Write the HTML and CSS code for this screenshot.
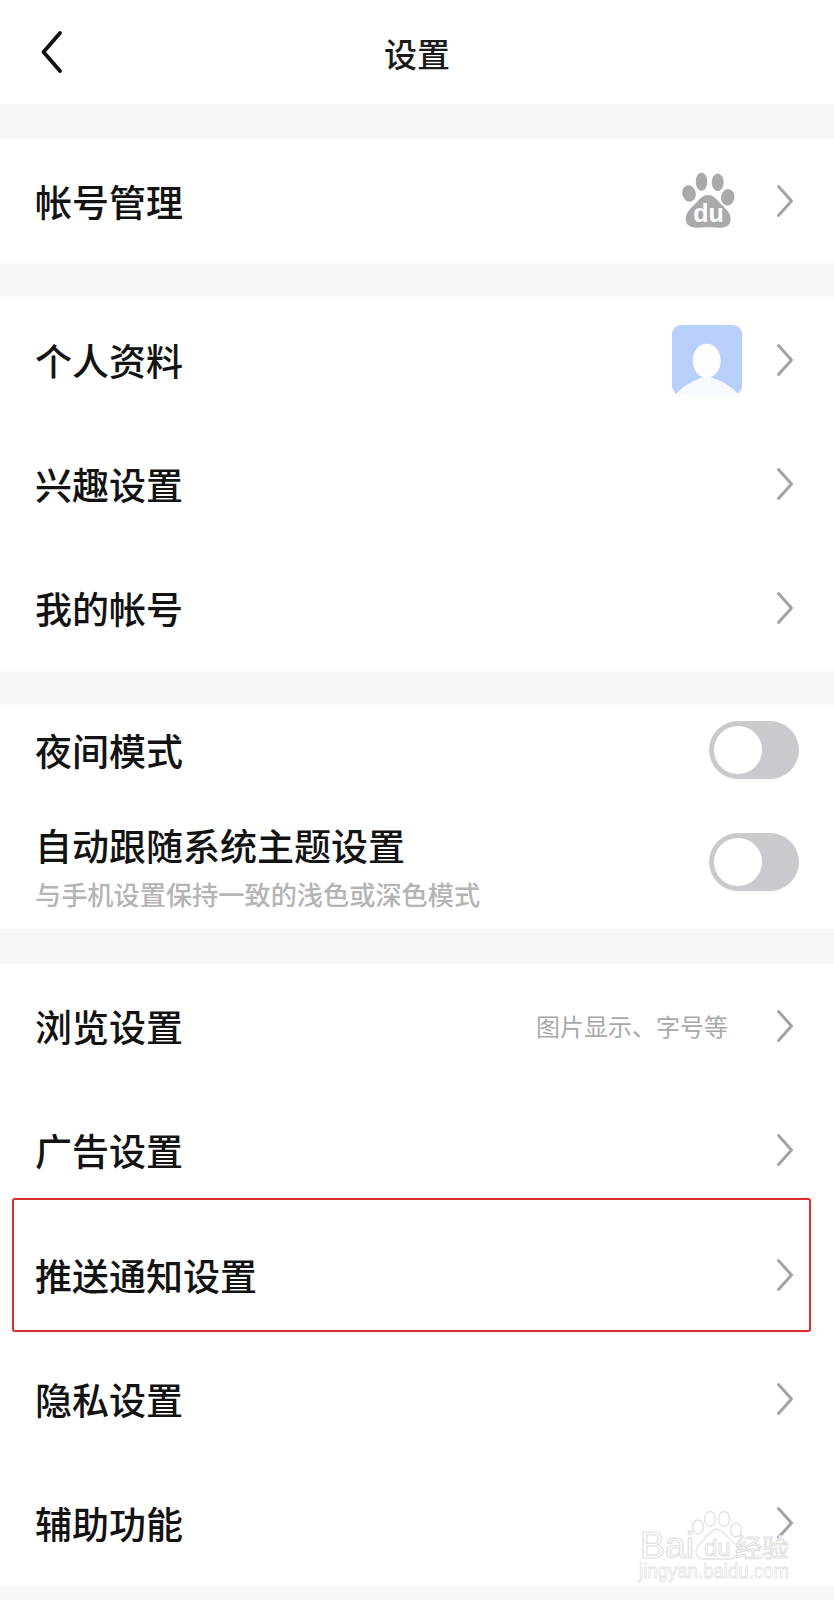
FILE: index.html
```html
<!DOCTYPE html>
<html lang="zh-CN">
<head>
    <meta charset="UTF-8">
    <meta name="viewport" content="width=device-width, initial-scale=1.0">
    <title>设置</title>
    <link rel="stylesheet" href="styles.css">
</head>
<body>
    <div class="page">
        <div class="header">
            <svg class="back-icon" width="24" height="44" viewBox="0 0 24 44">
                <path d="M21 3 L4.5 22 L21 41" fill="none" stroke="#111" stroke-width="3.8" stroke-linecap="round" stroke-linejoin="round"/>
            </svg>
            <h1 class="title">设置</h1>
        </div>

        <div class="group">
            <div class="row">
                <span class="label">帐号管理</span>
                <svg class="paw" width="54" height="58" viewBox="0 0 54 58">
                    <ellipse cx="7" cy="21.5" rx="6.7" ry="8.3" fill="#a9a9a9" transform="rotate(-15 7 21.5)"/>
                    <ellipse cx="19.5" cy="9.7" rx="5.8" ry="9.2" fill="#a9a9a9"/>
                    <ellipse cx="35.7" cy="10.3" rx="6" ry="8.7" fill="#a9a9a9"/>
                    <ellipse cx="45.7" cy="25.3" rx="6.7" ry="8.3" fill="#a9a9a9" transform="rotate(10 45.7 25.3)"/>
                    <path d="M26 23 C32 23 35 28 39 32 C44 37 49 41 48.7 48 C48 55 41 56.5 34 55.5 C29 55 24 55 19 55.5 C11 56.5 4 55 3.7 47 C3.7 40 9 36 13 32 C17 28 20 23 26 23 Z" fill="#a9a9a9"/>
                    <text class="paw-text" x="26.5" y="50" text-anchor="middle">du</text>
                </svg>
                <svg class="chevron" width="18" height="34" viewBox="0 0 18 34"><path d="M2.5 2.5 L15.5 17 L2.5 31.5"/></svg>
            </div>
        </div>

        <div class="group">
            <div class="row">
                <span class="label">个人资料</span>
                <svg class="avatar" width="70" height="70" viewBox="0 0 70 70">
                    <rect width="70" height="70" fill="#b8cffa"/>
                    <ellipse cx="34.7" cy="35.7" rx="14" ry="17" fill="#fdfdfd"/>
                    <path d="M4 69 C12 60 22 55 35 51 C48 55 58 60 66 69 Z" fill="#f6f9fe"/>
                    <rect y="69" width="70" height="1" fill="#f6f9fe"/>
                </svg>
                <svg class="chevron" width="18" height="34" viewBox="0 0 18 34"><path d="M2.5 2.5 L15.5 17 L2.5 31.5"/></svg>
            </div>
            <div class="row">
                <span class="label">兴趣设置</span>
                <svg class="chevron" width="18" height="34" viewBox="0 0 18 34"><path d="M2.5 2.5 L15.5 17 L2.5 31.5"/></svg>
            </div>
            <div class="row">
                <span class="label">我的帐号</span>
                <svg class="chevron" width="18" height="34" viewBox="0 0 18 34"><path d="M2.5 2.5 L15.5 17 L2.5 31.5"/></svg>
            </div>
        </div>

        <div class="group">
            <div class="row row-switch">
                <span class="label">夜间模式</span>
                <div class="toggle"><div class="knob"></div></div>
            </div>
            <div class="row row-switch-tall">
                <div class="label-stack">
                    <span class="label">自动跟随系统主题设置</span>
                    <span class="sub-label">与手机设置保持一致的浅色或深色模式</span>
                </div>
                <div class="toggle"><div class="knob"></div></div>
            </div>
        </div>

        <div class="group">
            <div class="row">
                <span class="label">浏览设置</span>
                <span class="value">图片显示、字号等</span>
                <svg class="chevron" width="18" height="34" viewBox="0 0 18 34"><path d="M2.5 2.5 L15.5 17 L2.5 31.5"/></svg>
            </div>
            <div class="row">
                <span class="label">广告设置</span>
                <svg class="chevron" width="18" height="34" viewBox="0 0 18 34"><path d="M2.5 2.5 L15.5 17 L2.5 31.5"/></svg>
            </div>
            <div class="row row-marked">
                <span class="label">推送通知设置</span>
                <svg class="chevron" width="18" height="34" viewBox="0 0 18 34"><path d="M2.5 2.5 L15.5 17 L2.5 31.5"/></svg>
            </div>
            <div class="row">
                <span class="label">隐私设置</span>
                <svg class="chevron" width="18" height="34" viewBox="0 0 18 34"><path d="M2.5 2.5 L15.5 17 L2.5 31.5"/></svg>
            </div>
            <div class="row">
                <span class="label">辅助功能</span>
                <svg class="chevron" width="18" height="34" viewBox="0 0 18 34"><path d="M2.5 2.5 L15.5 17 L2.5 31.5"/></svg>
            </div>
        </div>

        <!-- Watermark -->
        <svg class="watermark" width="156" height="78" viewBox="0 0 156 78">
            <g class="wm-paw">
                <ellipse cx="60" cy="18" rx="5.5" ry="7"/>
                <ellipse cx="72" cy="10" rx="5.5" ry="7.5"/>
                <ellipse cx="86" cy="10" rx="5.5" ry="7.5"/>
                <ellipse cx="98" cy="21" rx="5.5" ry="7"/>
                <path d="M79 20 C87 22 90 30 96 34 C103 40 100 50 91 50 L66 50 C58 50 55 41 62 35 C68 30 70 22 79 20 Z"/>
            </g>
            <text class="wm-big" x="2" y="49" textLength="54" lengthAdjust="spacingAndGlyphs">Bai</text>
            <text class="wm-du" x="66" y="47">du</text>
            <text class="wm-cn" x="97" y="48" textLength="54" lengthAdjust="spacingAndGlyphs">经验</text>
            <text class="wm-url" x="1" y="69" textLength="150" lengthAdjust="spacingAndGlyphs">jingyan.baidu.com</text>
        </svg>
    </div>
</body>
</html>
```

FILE: styles.css
```css
body {
    margin: 0;
    padding: 0;
    background-color: #f6f7f9;
    color: #131313;
    font-family: "Noto Sans CJK SC", "Noto Sans", sans-serif;
}

.page {
    position: relative;
    height: 1600px;
    overflow: hidden;
}

.header {
    display: flex;
    align-items: center;
    justify-content: center;
    position: relative;
    height: 104px;
    background-color: #fff;
}
.back-icon {
    position: absolute;
    left: 39px;
    top: 30px;
}
.title {
    margin: 1px 0 0;
    font-size: 33px;
    font-weight: 500;
    color: #1a1a1a;
}

.group {
    margin-top: 34.5px;
    background-color: #fff;
}

.row {
    display: flex;
    align-items: center;
    position: relative;
    height: 124.4px;
    padding: 0 40px 0 35px;
}
.row-switch {
    height: 90px;
    padding-right: 35px;
}
.row-switch-tall {
    height: 134px;
    padding-right: 35px;
}

/* Red marker drawn over the row */
.row-marked::after {
    content: "";
    position: absolute;
    left: 12px;
    right: 23px;
    top: -14px;
    bottom: 5px;
    border: 2px solid #d9302c;
    border-radius: 3px;
    box-shadow: 0 0 1px rgba(217, 48, 44, 0.6);
}

.label {
    font-size: 37px;
    font-weight: 500;
    line-height: 48px;
    margin-right: auto;
}
.label-stack {
    display: flex;
    flex-direction: column;
    margin-right: auto;
    margin-top: 8px;
}
.sub-label {
    font-size: 26.2px;
    font-weight: 500;
    line-height: 36px;
    margin-top: 7px;
    color: #b4b4b4;
}
.value {
    font-size: 24px;
    color: #a8a8a8;
    margin-right: 48px;
}

.chevron {
    flex: none;
}
.chevron path {
    fill: none;
    stroke: #a3a3a3;
    stroke-width: 3;
    stroke-linecap: round;
    stroke-linejoin: round;
}

.paw {
    margin-right: 40px;
}
.paw-text {
    font-family: "Liberation Sans", sans-serif;
    font-size: 25px;
    font-weight: 700;
    fill: #fff;
}
.avatar {
    margin-right: 34px;
    border-radius: 9px;
}

.toggle {
    display: flex;
    align-items: center;
    box-sizing: border-box;
    width: 90px;
    height: 58px;
    padding-left: 5px;
    border-radius: 29px;
    background-color: #c9cace;
}
.knob {
    width: 48px;
    height: 48px;
    border-radius: 50%;
    background-color: #fff;
}

.watermark {
    position: absolute;
    left: 638px;
    top: 1509px;
}
.wm-paw ellipse,
.wm-paw path {
    fill: rgba(255, 255, 255, 0.75);
    stroke: #e2e2e2;
    stroke-width: 1.4;
}
.wm-big {
    font-family: "Liberation Sans", sans-serif;
    font-size: 36px;
    fill: rgba(255, 255, 255, 0.7);
    stroke: #e0e0e0;
    stroke-width: 1.2;
}
.wm-du {
    font-family: "Liberation Sans", sans-serif;
    font-size: 24px;
    fill: #fff;
    stroke: #e0e0e0;
    stroke-width: 1;
}
.wm-cn {
    font-size: 25px;
    fill: #fff;
    stroke: #e0e0e0;
    stroke-width: 1;
}
.wm-url {
    font-family: "Liberation Sans", sans-serif;
    font-size: 21px;
    fill: #fff;
    stroke: #e2e2e2;
    stroke-width: 0.8;
}
```
